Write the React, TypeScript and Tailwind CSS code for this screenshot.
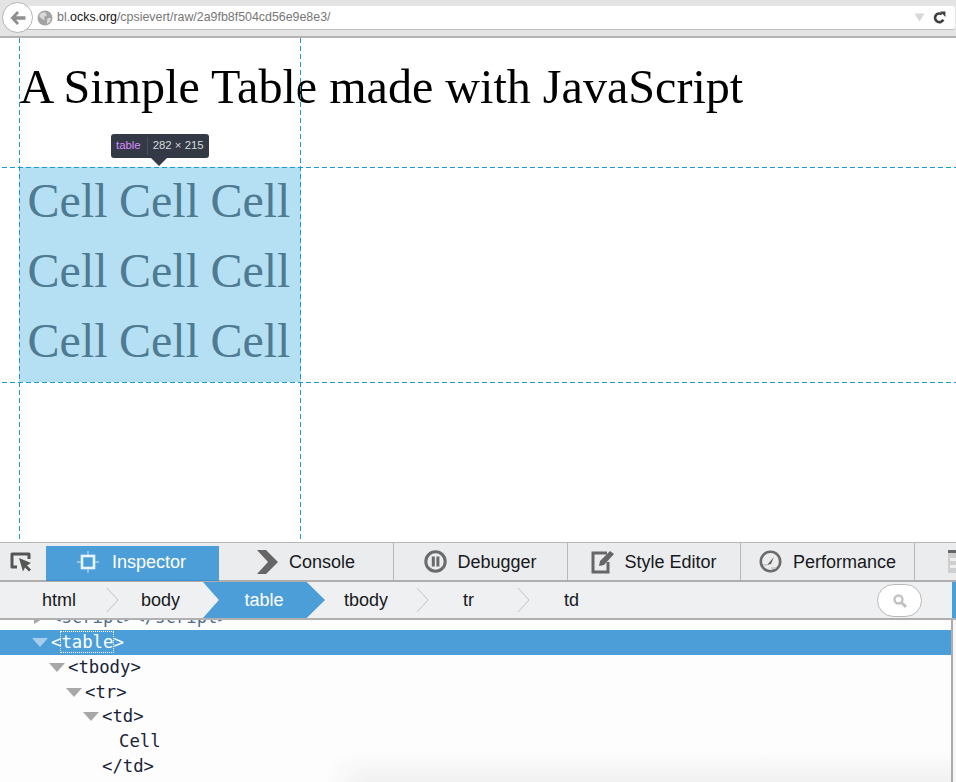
const rowsData = [0, 1, 2];

function Arrow({ white }: { white?: boolean }) {
  return (
    <svg width="18" height="11" viewBox="0 0 18 11" className="shrink-0">
      <path d="M1 1 H17 L9 10 Z" fill={white ? "#a5cdec" : "#a8a8a8"} />
    </svg>
  );
}

function Sep() {
  return (
    <svg width="16" height="28" viewBox="0 0 16 28" className="shrink-0">
      <path d="M1 2 L12 14 L1 26" fill="none" stroke="#c0c2c5" strokeWidth="1" />
    </svg>
  );
}

function Toolbar() {
  return (
    <div className="h-[38px] bg-[#e4e4e4] border-b-2 border-[#b3b3b3] relative pt-[6px] pl-[16px] pr-[1px]">
      <div className="h-[24px] bg-white rounded-r-[3px] border-b border-[#bdbdbd] flex items-center pl-[21px] pr-[9px]">
        <svg width="16" height="16" viewBox="0 0 16 16" className="shrink-0">
          <circle cx="8" cy="8" r="7.5" fill="#a3a3a3" />
          <path d="M4 3 L8 2 L10 5 L7 7 L8 10 L5 9 L2 6 Z M11 8 L14 8 L13 12 L10 14 L10 10 Z" fill="#d8d8d8" />
        </svg>
        <span className="ml-[4px] text-[12.4px] leading-none text-[#777] font-['Liberation_Sans',sans-serif] whitespace-nowrap">
          bl.<span className="text-[#111]">ocks.org</span>/cpsievert/raw/2a9fb8f504cd56e9e8e3/
        </span>
        <div className="flex-1" />
        <svg width="11" height="9" viewBox="0 0 11 9" className="mr-[8px]">
          <path d="M0.5 0.5 H10.5 L5.5 8.5 Z" fill="#d8d8d8" />
        </svg>
        <svg width="13" height="13" viewBox="0 0 12 12">
          <path d="M9.5 8 A4 4 0 1 1 8.2 3" fill="none" stroke="#404040" strokeWidth="2.4" />
          <path d="M6.5 0.5 L11.5 0.5 L11.5 5.5 Z" fill="#404040" />
        </svg>
      </div>
      <div className="absolute left-[2px] top-[2px] w-[31px] h-[31px] rounded-full bg-white border border-[#b5b5b5] flex items-center justify-center">
        <svg width="18" height="16" viewBox="0 0 18 16">
          <path d="M8 1 L1.5 8 L8 15 L10 13 L7 9.7 H16.5 V6.3 H7 L10 3 Z" fill="#8f8f8f" />
        </svg>
      </div>
    </div>
  );
}

function Tab({ icon, label, w, iconGap }: { icon: React.ReactNode; label: string; w: string; iconGap: string }) {
  return (
    <div className={w + " h-full border-r border-[#b9b9b9] flex items-center justify-center text-[18px] text-[#17191c] " + iconGap}>
      {icon}
      <span className="pt-[2px]">{label}</span>
    </div>
  );
}

function Page() {
  return (
    <div className="h-[504px] bg-white relative overflow-hidden">
      <h1 className="pl-[19.5px] pt-[19px] text-[48.1px] leading-[60px] text-black font-['Liberation_Serif',serif] whitespace-nowrap">
        A Simple Table made with JavaScript
      </h1>
      <div className="ml-[19px] mt-[50px] w-[282px] h-[215px] bg-[#b5e0f3] flex flex-col pt-[4px] font-['Liberation_Serif',serif] text-[48px] leading-[60px] text-[#4f7b92]">
        {rowsData.map((r) => (
          <div key={r} className="flex pl-[8.6px] gap-[11.4px] h-[70px]">
            <span>Cell</span>
            <span>Cell</span>
            <span>Cell</span>
          </div>
        ))}
      </div>
      <div className="absolute left-[19px] top-0 bottom-0 w-px bg-[repeating-linear-gradient(to_bottom,#1a9ad6_0,#1a9ad6_5px,transparent_5px,transparent_8px)]" />
      <div className="absolute left-[300px] top-0 bottom-0 w-px bg-[repeating-linear-gradient(to_bottom,#1a9ad6_0,#1a9ad6_5px,transparent_5px,transparent_8px)]" />
      <div className="absolute left-[2px] right-0 top-[129px] h-px bg-[repeating-linear-gradient(to_right,#1a9ad6_0,#1a9ad6_5px,transparent_5px,transparent_8px)]" />
      <div className="absolute left-[2px] right-0 top-[344px] h-px bg-[repeating-linear-gradient(to_right,#1a9ad6_0,#1a9ad6_5px,transparent_5px,transparent_8px)]" />
      <div className="absolute left-[111px] top-[96px] w-[98px] h-[24px] bg-[#343a45] rounded-[3px] flex items-center text-[11.4px] font-['Liberation_Sans',sans-serif]">
        <span className="pl-[5px] pr-[6px] text-[#d88cff]">table</span>
        <span className="h-[18px] border-l border-[#4c525c]" />
        <span className="pl-[5px] text-[#d5d9df]">282 × 215</span>
      </div>
      <div className="absolute left-[151px] top-[120px] w-0 h-0 border-l-[8px] border-r-[8px] border-t-[8px] border-l-transparent border-r-transparent border-t-[#343a45]" />
    </div>
  );
}

function Devtools() {
  return (
    <div className="h-[240px] flex flex-col font-['Liberation_Sans',sans-serif] border-t border-[#b8b8b8]">
      <div className="h-[37px] bg-[#ebecee] flex border-b-2 border-[#aeaeae] box-content">
        <div className="w-[46px] pl-[10px] pt-[1px] flex items-center">
          <svg width="22" height="20" viewBox="0 0 22 20">
            <path d="M7 15 H2 V2 H19 V7" fill="none" stroke="#555" strokeWidth="3" strokeLinejoin="round" />
            <path d="M9 6 L21 11 L17 13.5 L21 17.5 L19 19.5 L15 15.5 L13 19.5 Z" fill="#555" />
          </svg>
        </div>
        <div className="w-[173px] h-[35px] mt-[3px] pb-[2px] bg-[#4c9ed9] flex items-center pl-[31px] gap-[13px] text-[18px] text-white border-b border-[#428fc7]">
          <svg width="22" height="22" viewBox="0 0 22 22">
            <rect x="5" y="5" width="12" height="12" fill="none" stroke="#e8f3fb" strokeWidth="2.6" />
            <path d="M11 0 V4 M11 18 V22 M0 11 H4 M18 11 H22" stroke="#a9d2ef" strokeWidth="1.4" />
          </svg>
          <span>Inspector</span>
        </div>
        <Tab
          w="w-[175px]"
          iconGap="gap-[11px]"
          label="Console"
          icon={
            <svg width="21" height="24" viewBox="0 0 21 24">
              <path d="M0 0 H9 L21 12 L9 24 H0 L11 12 Z" fill="#666" />
            </svg>
          }
        />
        <Tab
          w="w-[174px]"
          iconGap="gap-[10px]"
          label="Debugger"
          icon={
            <svg width="23" height="23" viewBox="0 0 23 23">
              <circle cx="11.5" cy="11.5" r="9.7" fill="none" stroke="#6b6b6b" strokeWidth="3" />
              <rect x="7.8" y="6.5" width="3" height="10" fill="#6b6b6b" />
              <rect x="12.4" y="6.5" width="3" height="10" fill="#6b6b6b" />
            </svg>
          }
        />
        <Tab
          w="w-[173px]"
          iconGap="gap-[9px]"
          label="Style Editor"
          icon={
            <svg width="24" height="24" viewBox="0 0 24 24">
              <path d="M16 3 H2 V22 H17 V12" fill="none" stroke="#666" strokeWidth="3" />
              <path d="M8 16 L9 11 L19 1 L23 4 L13 15 Z" fill="#666" />
            </svg>
          }
        />
        <Tab
          w="w-[174px]"
          iconGap="gap-[11px]"
          label="Performance"
          icon={
            <svg width="23" height="23" viewBox="0 0 23 23">
              <circle cx="11.5" cy="11.5" r="9.7" fill="#ececec" stroke="#6b6b6b" strokeWidth="2.6" />
              <path d="M8 15 L15 7 L12 14 Z" fill="#666" />
              <path d="M4 15 H8 M12 18 H17" stroke="#c4c4c4" strokeWidth="1.5" />
            </svg>
          }
        />
        <div className="flex-1 flex items-center justify-end overflow-hidden">
          <svg width="8" height="24" viewBox="0 0 8 24">
            <rect x="0" y="1" width="8" height="22" fill="#cfcfcf" />
            <rect x="0" y="0" width="8" height="3" fill="#666" />
            <rect x="2" y="8" width="6" height="3" fill="#efefef" />
            <rect x="2" y="15" width="6" height="3" fill="#efefef" />
          </svg>
        </div>
      </div>
      <div className="h-[36px] bg-[#eff0f2] border-b-2 border-[#b0b0b0] box-content flex text-[18px] text-[#17191c] relative">
        <div className="w-[42px]" />
        <div className="flex items-center pt-[1px] w-[56px]">html</div>
        <div className="flex items-center pl-[8px] w-[43px]"><Sep /></div>
        <div className="flex items-center pt-[1px] w-[62px]">body</div>
        <div className="w-[122px] flex items-center justify-center pt-[1px] bg-[#4c9ed9] text-white [clip-path:polygon(0_0,85%_0,100%_50%,85%_100%,0_100%,13%_50%)]">table</div>
        <div className="flex items-center pl-[19px] pt-[1px] w-[91px]">tbody</div>
        <div className="flex items-center w-[47px]"><Sep /></div>
        <div className="flex items-center pt-[1px] w-[54px]">tr</div>
        <div className="flex items-center w-[47px]"><Sep /></div>
        <div className="flex items-center pt-[1px]">td</div>
        <div className="flex-1" />
        <div className="w-[45px] h-[33px] mt-[2px] mr-[30px] rounded-full bg-white border border-[#b9b9b9] flex items-center justify-center">
          <svg width="16" height="16" viewBox="0 0 16 16">
            <circle cx="6.5" cy="6.5" r="4" fill="none" stroke="#c2c2c2" strokeWidth="2.4" />
            <path d="M9.5 9.5 L14 14" stroke="#c2c2c2" strokeWidth="3" />
          </svg>
        </div>
        <div className="w-[4px] bg-[#4c9ed9]" />
      </div>
      <div className="flex-1 flex overflow-hidden bg-[#fdfdfd] relative">
        <div className="flex-1 -mt-[14.6px] font-['DejaVu_Sans_Mono',monospace] text-[17.3px] leading-[24.7px] text-[#17233a]">
          <div className="h-[24.6px] pl-[34px] flex items-center text-[#4f6f8f] whitespace-pre">
            <svg width="12" height="12" viewBox="0 0 12 12" className="mr-[5px]"><path d="M0 0 L10 6 L0 12 Z" fill="#a8a8a8" /></svg>
            {"<script></script>"}
          </div>
          <div className="h-[25px] bg-[#4c9ed9] flex items-center pl-[31px] gap-[2px] text-white">
            <Arrow white />
            <span>&lt;<span className="outline-1 outline-dotted outline-white px-0">table</span>&gt;</span>
          </div>
          <div className="h-[24.7px] flex items-center pl-[48px] gap-[2px]"><Arrow />&lt;tbody&gt;</div>
          <div className="h-[24.7px] flex items-center pl-[65px] gap-[2px]"><Arrow />&lt;tr&gt;</div>
          <div className="h-[24.7px] flex items-center pl-[82px] gap-[2px]"><Arrow />&lt;td&gt;</div>
          <div className="h-[24.7px] flex items-center pl-[119px]">Cell</div>
          <div className="h-[24.7px] flex items-center pl-[102px]">&lt;/td&gt;</div>
        </div>
        <div className="w-[5px] border-l-2 border-[#ababab] bg-[#f6f6f6]" />
        <div className="absolute left-[325px] right-[5px] bottom-0 h-[30px] bg-gradient-to-b from-transparent to-[#f1f1f1] [mask-image:linear-gradient(to_right,transparent,black_40px)]" />
      </div>
    </div>
  );
}

export default function App() {
  return (
    <div className="w-[956px] h-[782px] overflow-hidden flex flex-col bg-white">
      <Toolbar />
      <Page />
      <Devtools />
    </div>
  );
}
